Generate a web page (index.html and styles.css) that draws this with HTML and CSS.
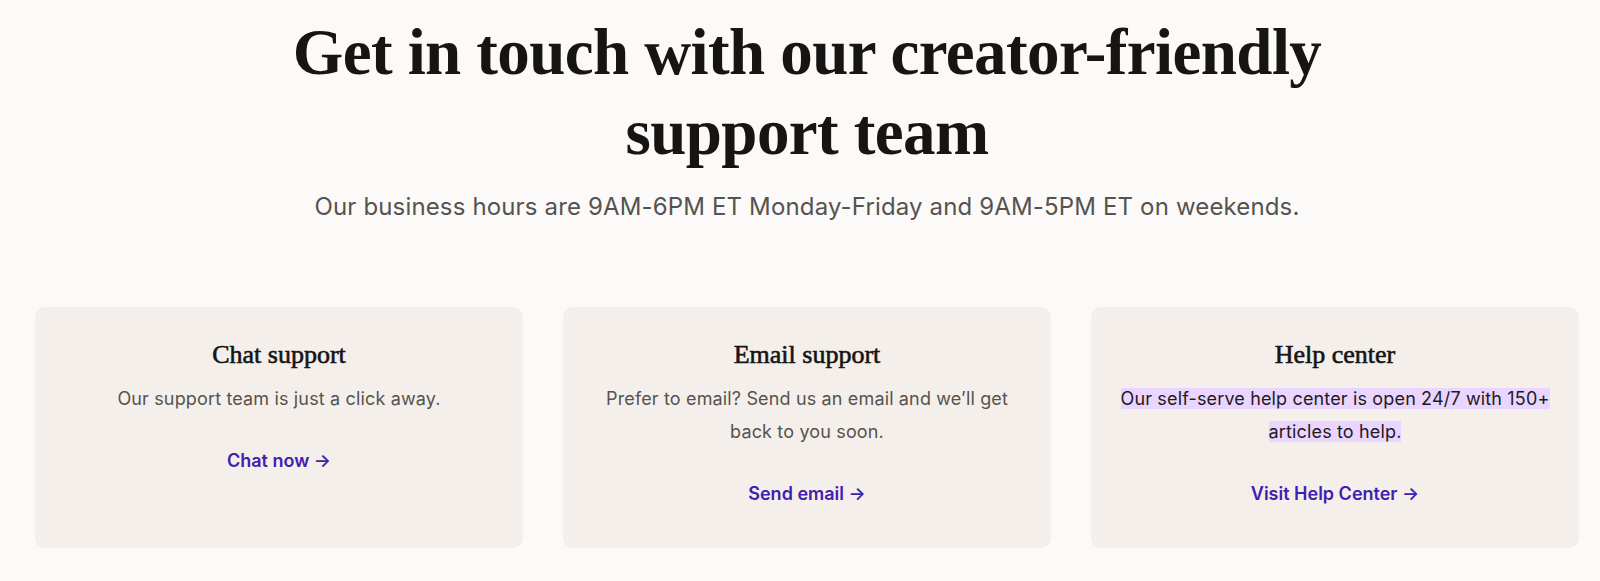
FILE: index.html
```html
<!DOCTYPE html>
<html lang="en">
<head>
<meta charset="utf-8">
<title>Contact support</title>
<link rel="stylesheet" href="styles.css">
</head>
<body>
<main class="page">
  <header class="hero">
    <h1 class="hero-title">Get in touch with our creator-friendly support team</h1>
    <p class="hero-sub">Our business hours are 9AM-6PM ET Monday-Friday and 9AM-5PM ET on weekends.</p>
  </header>
  <section class="cards">
    <article class="card">
      <h2 class="card-title">Chat support</h2>
      <p class="card-text">Our support team is just a click away.</p>
      <a class="card-link" href="#">Chat now →</a>
    </article>
    <article class="card">
      <h2 class="card-title">Email support</h2>
      <p class="card-text">Prefer to email? Send us an email and we’ll get back to you soon.</p>
      <a class="card-link" href="#">Send email →</a>
    </article>
    <article class="card">
      <h2 class="card-title">Help center</h2>
      <p class="card-text"><span class="selected">Our self-serve help center is open 24/7 with 150+ articles to help.</span></p>
      <a class="card-link" href="#">Visit Help Center →</a>
    </article>
  </section>
</main>
</body>
</html>
```

FILE: styles.css
```css
* { box-sizing: border-box; }
html, body { margin: 0; padding: 0; }
body {
  background: #fbfaf8;
  font-family: Inter, "Noto Sans", sans-serif;
  color: #1a1a1a;
}
.page {
  padding: 0 21px 0 35px;
}
.hero {
  text-align: center;
  padding-top: 12px;
}
.hero-title {
  font-family: "Liberation Serif", "Times New Roman", serif;
  font-weight: 700;
  font-size: 65px;
  line-height: 80px;
  letter-spacing: -0.6px;
  color: #161514;
  margin: 0 auto;
  max-width: 1100px;
}
.hero-sub {
  font-size: 24px;
  line-height: 32px;
  letter-spacing: 0.15px;
  color: #555350;
  margin: 19px 0 0;
}
.cards {
  display: grid;
  grid-template-columns: repeat(3, 1fr);
  gap: 40px;
  margin-top: 84px;
}
.card {
  background: #f4efea;
  border-radius: 10px;
  padding: 30px 24px 38px;
  text-align: center;
  min-height: 241px;
}
.card-title {
  font-family: "Liberation Serif", "Times New Roman", serif;
  font-weight: 400;
  font-size: 26px;
  line-height: 36px;
  -webkit-text-stroke: 0.6px #161514;
  color: #161514;
  margin: 0;
}
.card-text {
  font-size: 18px;
  line-height: 33px;
  letter-spacing: 0.15px;
  color: #555350;
  margin: 9px 0 0;
}
.selected {
  background: #e9d5ff;
  color: #1e1b1b;
}
.card-link {
  display: inline-block;
  margin-top: 32px;
  font-size: 18px;
  line-height: 27px;
  font-weight: 600;
  color: #4020b0;
  text-decoration: none;
}
```
